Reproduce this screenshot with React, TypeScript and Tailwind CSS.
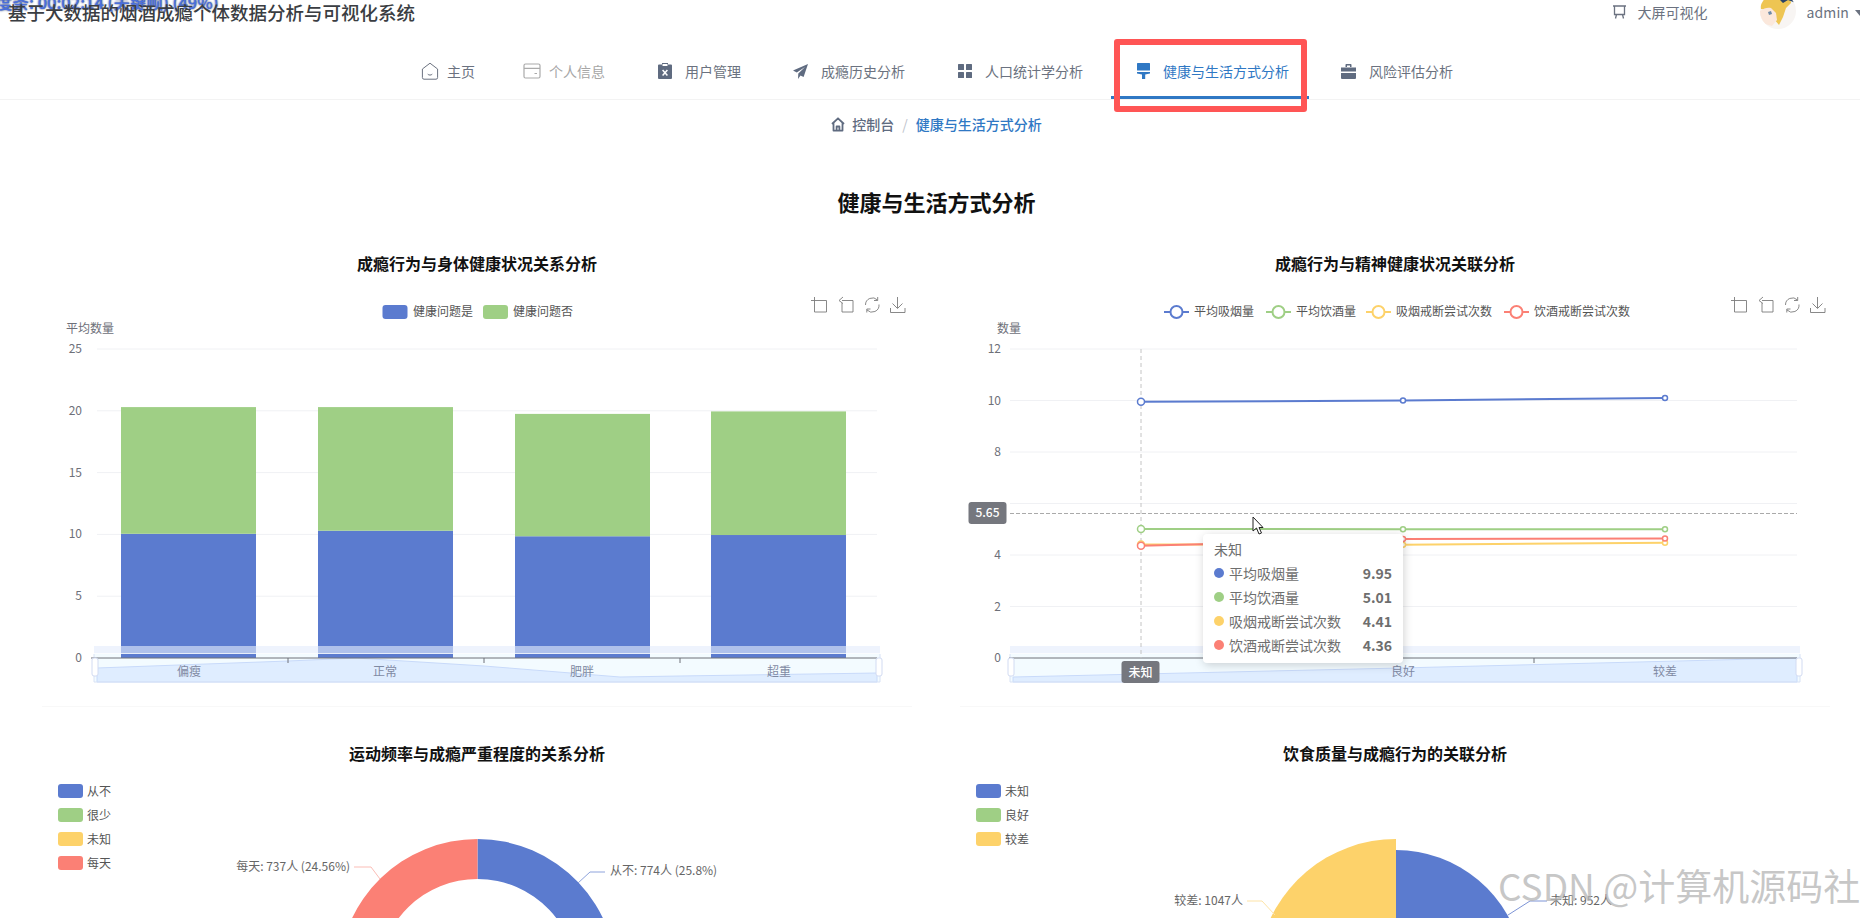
import type { ReactNode } from "react";

const BLUE = "#5b7bcf";
const GREEN = "#9fcf85";
const YELLOW = "#fdd26a";
const RED = "#fb8075";
const ACTIVE = "#2f78c4";

function HomeIcon() {
  return (
    <svg width="18" height="18" viewBox="0 0 18 18" fill="none" stroke="#6b7280" strokeWidth="1">
      <path d="M9 1.2 16.6 7v8.6a1.6 1.6 0 0 1-1.6 1.6H3a1.6 1.6 0 0 1-1.6-1.6V7Z" strokeLinejoin="round" />
      <path d="M7 12.4c1 1 3 1 4 0" strokeLinecap="round" />
    </svg>
  );
}

function CardIcon() {
  return (
    <svg width="18" height="16" viewBox="0 0 18 16" fill="none" stroke="#aaaaaa" strokeWidth="1.2">
      <rect x="1" y="1" width="16" height="14" rx="1.5" />
      <path d="M1 5.4h16M11.5 10.5h2.5" />
    </svg>
  );
}

function ClipboardIcon() {
  return (
    <svg width="14" height="16" viewBox="0 0 14 16">
      <path d="M4 0h6v1.5h3a1 1 0 0 1 1 1V15a1 1 0 0 1-1 1H1a1 1 0 0 1-1-1V2.500a1 1 0 0 1 1-1h3Z" fill="#5f6b80" />
      <rect x="4.500" y="1" width="5" height="2" fill="#fff" />
      <path d="M4.600 7 9.400 12.500M9.400 7 4.600 12.500" stroke="#fff" strokeWidth="1.500" />
    </svg>
  );
}

function PlaneIcon() {
  return (
    <svg width="15" height="15" viewBox="0 0 15 15" fill="#5f6b80">
      <path d="M15 0 0 6.600l3.800 1.800L12 3 5.300 9.400 5 15l2.500-3.600 3.100 1.500Z" />
    </svg>
  );
}

function GridIcon() {
  return (
    <svg width="14" height="14" viewBox="0 0 14 14" fill="#5f6b80">
      <rect width="6" height="6" rx="0.5" />
      <rect x="8" width="6" height="6" rx="0.5" />
      <rect y="8" width="6" height="6" rx="0.5" />
      <rect x="8" y="8" width="6" height="6" rx="0.5" />
    </svg>
  );
}

function BrushIcon() {
  return (
    <svg width="13" height="16" viewBox="0 0 13 16" fill={ACTIVE}>
      <rect width="13" height="7.500" rx="0.5" />
      <path d="M0 9h13v1.400L8.200 11.600V16H5v-4.400L0 10.400Z" />
    </svg>
  );
}

function CaseIcon() {
  return (
    <svg width="15" height="15" viewBox="0 0 15 15" fill="#5f6b80">
      <path d="M4.500 3V.800A.8.8 0 0 1 5.300 0h4.400a.8.8 0 0 1 .8.800V3H9V1.500H6V3Z" />
      <path d="M0 3.500h15v4H0ZM0 9h15v5a1 1 0 0 1-1 1H1a1 1 0 0 1-1-1Z" />
    </svg>
  );
}

function ScreenIcon() {
  return (
    <svg width="15" height="14" viewBox="0 0 15 14" fill="none" stroke="#6b7280" strokeWidth="1.300">
      <path d="M1 1h13M2.500 1v8.500h10V1M4.500 9.500 3.500 13.500M10.500 9.500l1 4" />
    </svg>
  );
}

function CrumbHome() {
  return (
    <svg width="14" height="15" viewBox="0 0 14 15" fill="none" stroke="#5f6b80" strokeWidth="1.800">
      <path d="M1 7 7 1.300 13 7M2.500 6v7.600h9V6M5.600 13.600V9.500h2.800v4.100" strokeLinejoin="round" />
    </svg>
  );
}

// echarts toolbox, drawn from the page origin of each chart
function Toolbox({ x }: { x: number }) {
  return (
    <g fill="none" stroke="#7c7c7c" strokeWidth="0.9" transform={`translate(${x} 297)`}>
      <path d="M3.500 0v15h12V3.500H0" />
      <path d="M31 3.500h11v11.500H31V6M28 3.500l4-3.500M28 3.500l4 3" />
      <path d="M54.500 8a7 7 0 0 1 12-5M68 7.500a7 7 0 0 1-12 5.500M66.700 0v3.500H63M55.800 15.500V12H59.500" />
      <path d="M86.500 0v11M81.500 6.500l5 5 5-5M79.500 11v4.500h14.500V11" />
    </g>
  );
}

function Swatch({ color }: { color: string }) {
  return <span className="block h-[14px] w-[25px] rounded-[3px]" style={{ backgroundColor: color }} />;
}

function PieLegend({ items }: { items: [string, string][] }) {
  return (
    <div className="absolute left-[16px] top-[14px] flex flex-col gap-[10px]">
      {items.map(([name, color]) => (
        <div key={name} className="flex h-[14px] items-center gap-[4px] text-[12px] leading-[14px] text-[#555]">
          <Swatch color={color} />
          {name}
        </div>
      ))}
    </div>
  );
}

function ZoomStrip({ x1, x2, area }: { x1: number; x2: number; area: string }) {
  return (
    <g>
      <rect x={x1 - 3} y="654" width={x2 - x1 + 6} height="28" fill="#f3fbff" />
      <path d={area} fill="#dfedff" stroke="#c8dafa" />
      <path d={`M${x1 - 3} 654v28M${x2 + 3} 654v28M${x1 - 3} 682H${x2 + 3}`} stroke="#d8e2f5" />
    </g>
  );
}

function ZoomTop({ x1, x2 }: { x1: number; x2: number }) {
  return (
    <g>
      <rect x={x1 - 3} y="646" width={x2 - x1 + 6} height="8" fill="#e3ebfb" fillOpacity="0.62" />
      <path d={`M${x1 - 3} 653.500H${x2 + 3}`} stroke="#ffffff" strokeOpacity="0.7" />
      <rect x={x1 - 5} y="658" width="6" height="18" rx="2" fill="#fff" stroke="#d2dbf2" />
      <rect x={x2 - 1} y="658" width="6" height="18" rx="2" fill="#fff" stroke="#d2dbf2" />
    </g>
  );
}

function BarChart() {
  const y = (v: number) => 658 - v * 12.36;
  const bars = [
    { x: 121, a: 10.05, b: 20.3, name: "偏瘦", c: 189 },
    { x: 318, a: 10.3, b: 20.3, name: "正常", c: 385 },
    { x: 515, a: 9.85, b: 19.75, name: "肥胖", c: 582 },
    { x: 711, a: 9.95, b: 19.95, name: "超重", c: 779 },
  ];
  return (
    <svg width="870" height="416" viewBox="42 290 870 416" className="block">
      <rect x="382.500" y="305" width="25" height="14" rx="3" fill={BLUE} />
      <text x="413" y="315.500" fontSize="12" fill="#555">健康问题是</text>
      <rect x="483" y="305" width="25" height="14" rx="3" fill={GREEN} />
      <text x="513" y="315.500" fontSize="12" fill="#555">健康问题否</text>
      <Toolbox x={811} />
      <text x="66" y="332.500" fontSize="12" fill="#6e7079">平均数量</text>
      {[5, 10, 15, 20, 25].map((v) => (
        <path key={v} d={`M97 ${y(v)}H877`} stroke="#f0f1f4" />
      ))}
      {[0, 5, 10, 15, 20, 25].map((v) => (
        <text key={v} x="82" y={y(v) + 4} fontSize="12" textAnchor="end" fill="#6e7079">{v}</text>
      ))}
      <ZoomStrip
        x1={97}
        x2={877}
        area="M97 668 288 661 356 658 484 666 620 677 680 676 877 673V682H97Z"
      />
      {bars.map((b) => (
        <g key={b.x}>
          <rect x={b.x} y={y(b.a)} width="135" height={658 - y(b.a)} fill={BLUE} />
          <rect x={b.x} y={y(b.b)} width="135" height={y(b.a) - y(b.b)} fill={GREEN} />
        </g>
      ))}
      <path d="M91 658H877M288 658v5M484 658v5M680 658v5M877 658v5M97 658v5" stroke="#6e7079" />
      {bars.map((b) => (
        <text key={b.name} x={b.c} y="675.500" fontSize="12" textAnchor="middle" fill="#7f8aa3">{b.name}</text>
      ))}
      <ZoomTop x1={97} x2={877} />
    </svg>
  );
}

const lineSeries = [
  { color: BLUE, v: [9.95, 10.0, 10.1] },
  { color: GREEN, v: [5.01, 5.0, 5.0] },
  { color: YELLOW, v: [4.41, 4.4, 4.48] },
  { color: RED, v: [4.36, 4.62, 4.64] },
];

function LineLegendItem({ x, color, name }: { x: number; color: string; name: string }) {
  return (
    <g>
      <path d={`M${x} 312h25`} stroke={color} strokeWidth="2" />
      <circle cx={x + 12.5} cy="312" r="6" fill="#fff" stroke={color} strokeWidth="2" />
      <text x={x + 30} y="315.500" fontSize="12" fill="#555">{name}</text>
    </g>
  );
}

function LineChart() {
  const y = (v: number) => 658 - v * 25.75;
  const xs = [1141, 1403, 1665];
  return (
    <svg width="870" height="416" viewBox="960 290 870 416" className="block">
      <LineLegendItem x={1164} color={BLUE} name="平均吸烟量" />
      <LineLegendItem x={1266} color={GREEN} name="平均饮酒量" />
      <LineLegendItem x={1366} color={YELLOW} name="吸烟戒断尝试次数" />
      <LineLegendItem x={1504} color={RED} name="饮酒戒断尝试次数" />
      <Toolbox x={1731} />
      <text x="997" y="332.500" fontSize="12" fill="#6e7079">数量</text>
      {[2, 4, 6, 8, 10, 12].map((v) => (
        <path key={v} d={`M1010 ${y(v)}H1797`} stroke="#f0f1f4" />
      ))}
      {[0, 2, 4, 8, 10, 12].map((v) => (
        <text key={v} x="1001" y={y(v) + 4} fontSize="12" textAnchor="end" fill="#6e7079">{v}</text>
      ))}
      <ZoomStrip x1={1013} x2={1797} area="M1013 677 1400 668 1797 658V682H1013Z" />
      <path d="M1009 658H1797M1272 658v5M1534 658v5M1797 658v5" stroke="#6e7079" />
      <text x="1403" y="675.500" fontSize="12" textAnchor="middle" fill="#7f8aa3">良好</text>
      <text x="1665" y="675.500" fontSize="12" textAnchor="middle" fill="#7f8aa3">较差</text>
      <ZoomTop x1={1013} x2={1797} />
      <path d="M1141 349V658" stroke="#c4c4c4" strokeDasharray="4 3" />
      <path d="M1010 513.500H1797" stroke="#aaaaaa" strokeDasharray="4 2" />
      {lineSeries.map((s) => (
        <g key={s.color}>
          <path
            d={`M${xs[0]} ${y(s.v[0])}L${xs[1]} ${y(s.v[1])}L${xs[2]} ${y(s.v[2])}`}
            fill="none"
            stroke={s.color}
            strokeWidth="2"
          />
          {s.v.map((v, i) => (
            <circle key={i} cx={xs[i]} cy={y(v)} r={i === 0 ? 3.5 : 2.5} fill="#fff" stroke={s.color} strokeWidth="1.500" />
          ))}
        </g>
      ))}
      <rect x="968.500" y="502" width="38" height="22" rx="3" fill="#75777e" />
      <text x="987.500" y="517" fontSize="12" textAnchor="middle" fontWeight="500" fill="#fff">5.65</text>
      <rect x="1121.500" y="661" width="38" height="22" rx="3" fill="#75777e" />
      <text x="1140.500" y="676.500" fontSize="12" textAnchor="middle" fontWeight="500" fill="#fff">未知</text>
    </svg>
  );
}

function Ring({ cx, cy, R, r, from, to, fill }: { cx: number; cy: number; R: number; r: number; from: number; to: number; fill: string }) {
  const pt = (rad: number, deg: number) => {
    const a = (deg * Math.PI) / 180;
    return `${(cx + rad * Math.sin(a)).toFixed(2)} ${(cy - rad * Math.cos(a)).toFixed(2)}`;
  };
  const sweep = to > from ? 1 : 0;
  const back = to > from ? 0 : 1;
  const inner = r > 0 ? `L${pt(r, to)}A${r} ${r} 0 0 ${back} ${pt(r, from)}` : `L${cx} ${cy}`;
  return <path d={`M${pt(R, from)}A${R} ${R} 0 0 ${sweep} ${pt(R, to)}${inner}Z`} fill={fill} />;
}

function Label({ x, y, anchor, line, color, children }: { x: number; y: number; anchor: "start" | "end"; line: string; color: string; children: ReactNode }) {
  return (
    <g>
      <path d={line} fill="none" stroke={color} strokeWidth="1" />
      <text x={x} y={y} fontSize="12" textAnchor={anchor} fill="#666">{children}</text>
    </g>
  );
}

function RingChart() {
  return (
    <svg width="870" height="148" viewBox="42 770 870 148" className="block">
      <Ring cx={477.5} cy={978} R={139} r={99} from={0} to={92.9} fill={BLUE} />
      <Ring cx={477.5} cy={978} R={139} r={99} from={0} to={-88.4} fill={RED} />
      <Label x={350} y={871} anchor="end" color="#fbbdb6" line="M354 867H371L380 879">每天: 737人 (24.56%)</Label>
      <Label x={610} y={875} anchor="start" color="#8ea3dc" line="M605 872H590L578 883">从不: 774人 (25.8%)</Label>
    </svg>
  );
}

function RoseChart() {
  return (
    <svg width="870" height="148" viewBox="960 770 870 148" className="block">
      <Ring cx={1396} cy={978} R={128} r={0} from={0} to={80} fill={BLUE} />
      <Ring cx={1396} cy={978} R={139} r={0} from={0} to={-80} fill={YELLOW} />
      <Label x={1243} y={905} anchor="end" color="#fde3a6" line="M1247 901H1262L1275 915">较差: 1047人</Label>
      <Label x={1550} y={905} anchor="start" color="#7d94d6" line="M1547 901H1530L1508 915">未知: 952人</Label>
    </svg>
  );
}

const navItems = [
  { name: "主页", icon: <HomeIcon />, box: "w-[26px]", pad: "pr-[22px] border-transparent", text: "text-[#6b7280]" },
  { name: "个人信息", icon: <CardIcon />, box: "w-[26px]", pad: "pr-[27px] border-transparent", text: "text-[#a6a6a6]" },
  { name: "用户管理", icon: <ClipboardIcon />, box: "w-[27px]", pad: "pr-[26px] border-transparent", text: "text-[#6b7280]" },
  { name: "成瘾历史分析", icon: <PlaneIcon />, box: "w-[28px]", pad: "pr-[27px] border-transparent", text: "text-[#6b7280]" },
  { name: "人口统计学分析", icon: <GridIcon />, box: "w-[27px]", pad: "pr-[28px] border-transparent", text: "text-[#6b7280]" },
  { name: "健康与生活方式分析", icon: <BrushIcon />, box: "w-[26px]", pad: "pr-[20px] mr-[6px] border-[#2f78c4]", text: "text-[#2f78c4]" },
  { name: "风险评估分析", icon: <CaseIcon />, box: "w-[28px]", pad: "pr-[20px] border-transparent", text: "text-[#6b7280]" },
];

const tooltipRows = [
  { name: "平均吸烟量", value: "9.95", color: BLUE },
  { name: "平均饮酒量", value: "5.01", color: GREEN },
  { name: "吸烟戒断尝试次数", value: "4.41", color: YELLOW },
  { name: "饮酒戒断尝试次数", value: "4.36", color: RED },
];

export default function App() {
  return (
    <div
      className="relative h-[918px] w-[1860px] overflow-hidden bg-white"
      style={{ fontFamily: '"Noto Sans CJK SC", "Noto Sans", sans-serif' }}
    >
      <div className="w-[1873px]">
        {/* top bar */}
        <header className="relative flex h-[24px] items-center">
          <span className="absolute -top-[10px] -left-[4px] whitespace-nowrap text-[16.500px] leading-[24px] font-medium text-[#4a6fdc] [text-shadow:0_0_2px_#1c2f66]">
            度条: 00:02:14 (关键帧) (49%)
          </span>
          <h1 className="relative ml-[8px] text-[18.500px] font-medium leading-[24px] text-[#3a3d42]">
            基于大数据的烟酒成瘾个体数据分析与可视化系统
          </h1>
          <div className="ml-auto flex items-center pr-[8px]">
            <ScreenIcon />
            <span className="ml-[11px] text-[14px] text-[#6b7280]">大屏可视化</span>
            <svg width="36" height="36" viewBox="0 0 36 36" className="mt-[-2px] ml-[52px]">
              <defs>
                <clipPath id="avatar">
                  <circle cx="18" cy="18" r="18" />
                </clipPath>
              </defs>
              <g clipPath="url(#avatar)">
                <rect width="36" height="36" fill="#f8f5f3" />
                <path d="M2 0h28l1 10-5 5-3 9-4 8-5-6-5-9-8-1-1-8Z" fill="#eec553" />
                <path d="M0 18c4-3 8-4 11-3l5 5 1 7-5 6-7-2-5-5Z" fill="#fbe8dc" />
                <path d="M17 0h8l4 5 7-2v7l-8-3-5 3-4-4Z" fill="#2a4468" />
                <path d="M8 19l3-1 1 3-3 1Z" fill="#6d8aa8" />
              </g>
            </svg>
            <span className="ml-[11px] text-[14px] tracking-[0.1px] text-[#6b7280]">admin</span>
            <span className="mt-[2px] ml-[6px] h-0 w-0 border-x-[5px] border-t-[6px] border-x-transparent border-t-[#6b7280]" />
          </div>
        </header>

        {/* nav */}
        <nav className="flex h-[76px] items-end justify-center border-b border-[#f3f3f3] pr-[5px]">
          {navItems.map((item) => (
            <div
              key={item.name}
              className={`flex h-[56px] items-center border-b-[3px] pt-[3px] pl-[26px] text-[14px] ${item.pad} ${item.text}`}
            >
              <span className={`flex items-center ${item.box}`}>{item.icon}</span>
              {item.name}
            </div>
          ))}
        </nav>

        {/* breadcrumb */}
        <div className="flex h-[48px] items-center justify-center text-[14px]">
          <CrumbHome />
          <span className="ml-[7px] font-medium text-[#5f6b80]">控制台</span>
          <span className="mx-[8px] text-[#c0c4cc]">/</span>
          <span className="font-medium text-[#2f78c4]">健康与生活方式分析</span>
        </div>

        <h2 className="mt-[37px] text-center text-[22px] leading-[32px] font-bold text-[#111]">健康与生活方式分析</h2>

        <div className="mt-[34px] ml-[42px] grid w-[1788px] grid-cols-[870px_870px] gap-x-[48px]">
          {/* bar chart card */}
          <section className="border-b border-[#f8f8f8]">
            <h3 className="mb-[15px] text-center text-[16px] leading-[24px] font-bold text-[#111]">成瘾行为与身体健康状况关系分析</h3>
            <BarChart />
          </section>

          {/* line chart card */}
          <section className="relative border-b border-[#f8f8f8]">
            <h3 className="mb-[15px] text-center text-[16px] leading-[24px] font-bold text-[#111]">成瘾行为与精神健康状况关联分析</h3>
            <LineChart />
            <div className="absolute top-[283px] left-[243px] h-[129px] w-[200px] rounded-[4px] bg-white px-[11px] pt-[3px] text-[14px] leading-[24px] text-[#6e6e6e] shadow-[1px_2px_10px_rgba(0,0,0,0.18)]">
              <div>未知</div>
              {tooltipRows.map((row) => (
                <div key={row.name} className="flex items-center">
                  <span className="mr-[5px] h-[10px] w-[10px] rounded-full" style={{ backgroundColor: row.color }} />
                  <span className="flex-1">{row.name}</span>
                  <span className="font-bold">{row.value}</span>
                </div>
              ))}
            </div>
          </section>

          {/* ring chart card */}
          <section className="relative mt-[34px]">
            <h3 className="mb-[5px] text-center text-[16px] leading-[24px] font-bold text-[#111]">运动频率与成瘾严重程度的关系分析</h3>
            <div className="relative">
              <PieLegend
                items={[
                  ["从不", BLUE],
                  ["很少", GREEN],
                  ["未知", YELLOW],
                  ["每天", RED],
                ]}
              />
              <RingChart />
            </div>
          </section>

          {/* rose chart card */}
          <section className="relative mt-[34px]">
            <h3 className="mb-[5px] text-center text-[16px] leading-[24px] font-bold text-[#111]">饮食质量与成瘾行为的关联分析</h3>
            <div className="relative">
              <PieLegend
                items={[
                  ["未知", BLUE],
                  ["良好", GREEN],
                  ["较差", YELLOW],
                ]}
              />
              <RoseChart />
            </div>
          </section>
        </div>
      </div>

      {/* red highlight box from the screenshot annotation */}
      <div className="absolute top-[39px] left-[1114px] h-[73px] w-[193px] rounded-[3px] border-[6px] border-[#ff5555]" />

      {/* mouse pointer */}
      <svg width="13" height="19" viewBox="0 0 13 19" className="absolute top-[516px] left-[1252px]">
        <path d="M1 1v14l3.500-3 2.500 6 2.500-1-2.500-5.500H11Z" fill="#fff" stroke="#222" strokeWidth="1" />
      </svg>

      {/* watermark */}
      <span className="absolute top-[858px] left-[1498px] text-[37px] leading-[54px] whitespace-nowrap text-[#b5b5b5]/75">
        CSDN @计算机源码社
      </span>
    </div>
  );
}
